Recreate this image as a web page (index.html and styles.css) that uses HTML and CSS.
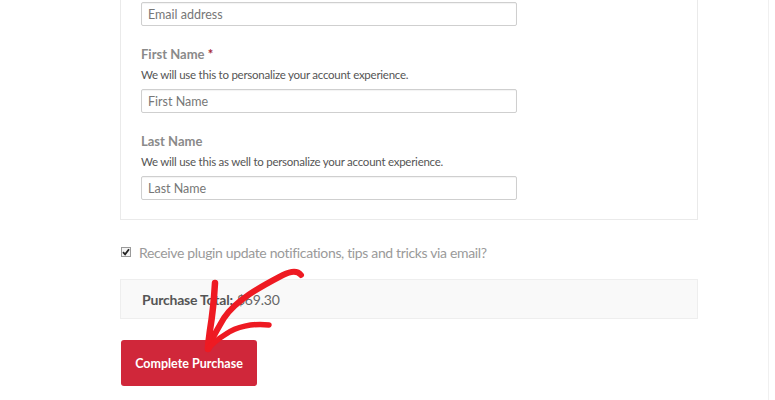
FILE: index.html
```html
<!DOCTYPE html>
<html>
<head>
<meta charset="utf-8">
<link rel="stylesheet" href="styles.css">
</head>
<body>
<div class="page">
  <div class="form">
    <div class="box">
      <div class="input"><span class="ph">Email address</span></div>
      <div class="field">
        <div class="label">First Name <span class="req">*</span></div>
        <div class="desc">We will use this to personalize your account experience.</div>
        <div class="input"><span class="ph">First Name</span></div>
      </div>
      <div class="field">
        <div class="label">Last Name</div>
        <div class="desc">We will use this as well to personalize your account experience.</div>
        <div class="input"><span class="ph">Last Name</span></div>
      </div>
    </div>
    <div class="optin">
      <span class="check"><svg width="8" height="8" viewBox="0 0 8 8"><path d="M1 4.2 L3.1 6.4 L7 1.2" fill="none" stroke="#222" stroke-width="1.8"/></svg></span>
      <span class="optin-text">Receive plugin update notifications, tips and tricks via email?</span>
    </div>
    <div class="total"><strong>Purchase Total:</strong> <span class="amount">$69.30</span></div>
    <button class="buy">Complete Purchase</button>
  </div>
  <svg class="arrow" width="775" height="400" viewBox="0 0 775 400">
    <g fill="none" stroke="#ee1a22" stroke-linecap="round" stroke-linejoin="round">
      <path d="M301 275 C297 270 291 271 283 275 C260 287 236 300 224 318 C217 330 211 340 208 348" stroke-width="6"/>
      <path d="M215 283 C214 300 212 318 210 330 C209 338 208 344 208 349" stroke-width="6.5"/>
      <path d="M269 325 C252 323 236 327 226 334 C218 339 212 344 209 348" stroke-width="5.5"/>
    </g>
  </svg>
</div>
</body>
</html>
```
FILE: styles.css
```css
html, body {
  margin: 0;
  padding: 0;
  background: #fff;
}
.page {
  position: relative;
  width: 768px;
  height: 400px;
  border-right: 1px solid #f0f0f0;
  font-family: Lato, "Liberation Sans", sans-serif;
  overflow: hidden;
}
.form {
  width: 578px;
  margin-left: 120px;
  display: flex;
  flex-direction: column;
}
.box {
  border: 1px solid #eaeaea;
  border-top: none;
  padding: 2px 20px 19px 20px;
  display: flex;
  flex-direction: column;
}
.input {
  box-sizing: border-box;
  width: 376px;
  height: 24px;
  border: 1px solid #cfcfcf;
  border-radius: 2px;
  box-shadow: inset 0 1px 1px rgba(0,0,0,0.05);
  padding: 0 6px;
  display: flex;
  align-items: center;
}
.ph {
  font-size: 12.5px;
  color: #777;
}
.field {
  margin-top: 20px;
  display: flex;
  flex-direction: column;
}
.label {
  font-size: 13px;
  line-height: 16px;
  font-weight: 700;
  color: #8a8a8a;
}
.req {
  color: #a52a3a;
}
.desc {
  font-size: 11.5px;
  line-height: 15px;
  letter-spacing: -0.25px;
  color: #555;
  margin-top: 5px;
  margin-bottom: 7px;
}
.optin {
  margin-top: 26px;
  display: flex;
  align-items: center;
  height: 12px;
  margin-left: 1px;
}
.check {
  box-sizing: border-box;
  width: 10px;
  height: 10px;
  border: 1px solid #9a9a9a;
  background: #f4f4f4;
  display: flex;
  align-items: center;
  justify-content: center;
}
.optin-text {
  margin-left: 8px;
  font-size: 14px;
  letter-spacing: -0.35px;
  color: #9a9a9a;
}
.total {
  margin-top: 21px;
  box-sizing: border-box;
  height: 40px;
  border: 1px solid #eeeeee;
  background: #f9f9f9;
  padding: 0 21px;
  display: flex;
  align-items: center;
  gap: 4px;
  font-size: 14px;
  letter-spacing: -0.2px;
  color: #555;
}
.total strong {
  font-weight: 700;
}
.amount {
  color: #666;
}
.buy {
  margin-top: 21px;
  align-self: flex-start;
  margin-left: 1px;
  width: 136px;
  height: 46px;
  border: none;
  border-radius: 3px;
  background: #d0273a;
  color: #fff;
  font-family: Lato, "Liberation Sans", sans-serif;
  font-weight: 700;
  font-size: 12.5px;
  padding: 0;
}
.arrow {
  position: absolute;
  left: 0;
  top: 0;
  pointer-events: none;
}
```
